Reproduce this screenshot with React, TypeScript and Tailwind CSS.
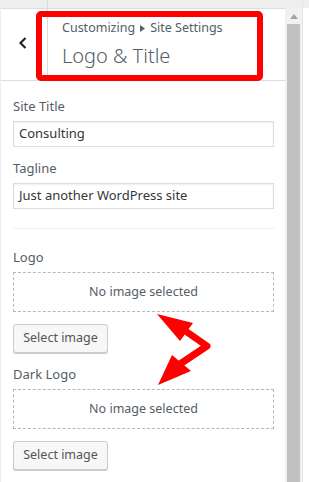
import React from "react";

const font = { fontFamily: '"Noto Sans", "Open Sans", sans-serif' };

function Label({ children }: { children: React.ReactNode }) {
  return <div className="text-[13px] leading-[18px] text-[#555d66] mb-[6px]">{children}</div>;
}

function Field({ label, value }: { label: string; value: string }) {
  return (
    <div className="flex flex-col">
      <Label>{label}</Label>
      <div className="h-[26px] border border-[#ddd] flex items-center px-[5px] text-[13px] text-[#32373c] shadow-[inset_0_1px_2px_rgba(0,0,0,0.07)]">
        {value}
      </div>
    </div>
  );
}

function ImageControl({ label }: { label: string }) {
  return (
    <div className="flex flex-col">
      <Label>{label}</Label>
      <div className="h-[40px] border border-dashed border-[#b4b9be] flex items-center justify-center text-[12.5px] text-[#555d66]">
        No image selected
      </div>
      <div className="mt-[12px] flex">
        <button className="h-[29px] w-[95px] rounded-[3px] border border-[#ccc] bg-[#f7f7f7] text-[12.5px] text-[#555] shadow-[0_1px_0_#ccc] flex items-center justify-center">
          Select image
        </button>
      </div>
    </div>
  );
}

export default function App() {
  return (
    <div className="relative w-[309px] h-[482px] overflow-hidden bg-white flex" style={font}>
      <div className="w-[285px] shrink-0 flex flex-col border-l border-[#eee]">
        <div className="flex h-[81px] shrink-0 border-b border-[#ddd]">
          <div className="w-[47px] shrink-0 border-r border-[#ddd] flex flex-col">
            <div className="h-[9px] shrink-0 bg-[#eee] border-b border-[#ddd]" />
            <div className="flex-1 flex items-center justify-center pr-[2px] pb-[3px]">
              <svg width="10" height="14" viewBox="0 0 10 14">
                <path d="M7.5 2 L2.5 7 L7.5 12" stroke="#23282d" strokeWidth="2.2" fill="none" />
              </svg>
            </div>
          </div>
          <div className="flex-1 flex flex-col">
            <div className="h-[9px] shrink-0 bg-[#eee] border-b border-[#ddd]" />
            <div className="pl-[14px] pt-[10px]">
              <div className="text-[12.5px] leading-[18px] text-[#555d66] flex items-center">
                <span>Customizing</span>
                <svg className="mx-[5px]" width="5" height="7" viewBox="0 0 5 7"><path d="M0 0 L5 3.5 L0 7Z" fill="#555d66" /></svg>
                <span>Site Settings</span>
              </div>
              <div className="text-[20px] leading-[26px] font-light text-[#555d66] mt-[6px]">Logo &amp; Title</div>
            </div>
          </div>
        </div>
        <div className="pl-[12px] pr-[11px] pt-[16px] flex flex-col">
          <Field label="Site Title" value="Consulting" />
          <div className="h-[12px]" />
          <Field label="Tagline" value="Just another WordPress site" />
          <div className="mt-[19px] h-px bg-[#eee]" />
          <div className="h-[19px]" />
          <ImageControl label="Logo" />
          <div className="h-[12px]" />
          <ImageControl label="Dark Logo" />
        </div>
      </div>
      <div className="w-[17px] shrink-0 flex flex-col">
        <div className="h-[8px] shrink-0 bg-[#eee]" />
        <div className="flex-1 bg-[#f1f1f1] flex flex-col items-center">
          <div className="h-[16px] flex items-center justify-center">
            <svg width="8" height="5" viewBox="0 0 8 5"><path d="M0 5 L4 0 L8 5Z" fill="#a3a3a3" /></svg>
          </div>
          <div className="w-[13px] flex-1 bg-[#c1c1c1]" />
        </div>
      </div>
      <div className="flex-1 border-l border-[#e5e5e5] flex flex-col">
        <div className="h-[8px] bg-[#eee]" />
      </div>

      <div className="absolute left-[36px] top-[11px] w-[227px] h-[70px] border-[6px] border-[#ff0000] rounded-[5px]" />

      <svg className="absolute left-0 top-0" width="309" height="482" viewBox="0 0 309 482">
        <polyline points="184,330 207,346 180,364" stroke="#ff0000" strokeWidth="7" fill="none" strokeLinejoin="round" />
        <polygon points="157,314 193,323 180,341" fill="#ff0000" />
        <polygon points="158,385 172,355 191,371" fill="#ff0000" />
      </svg>
    </div>
  );
}
